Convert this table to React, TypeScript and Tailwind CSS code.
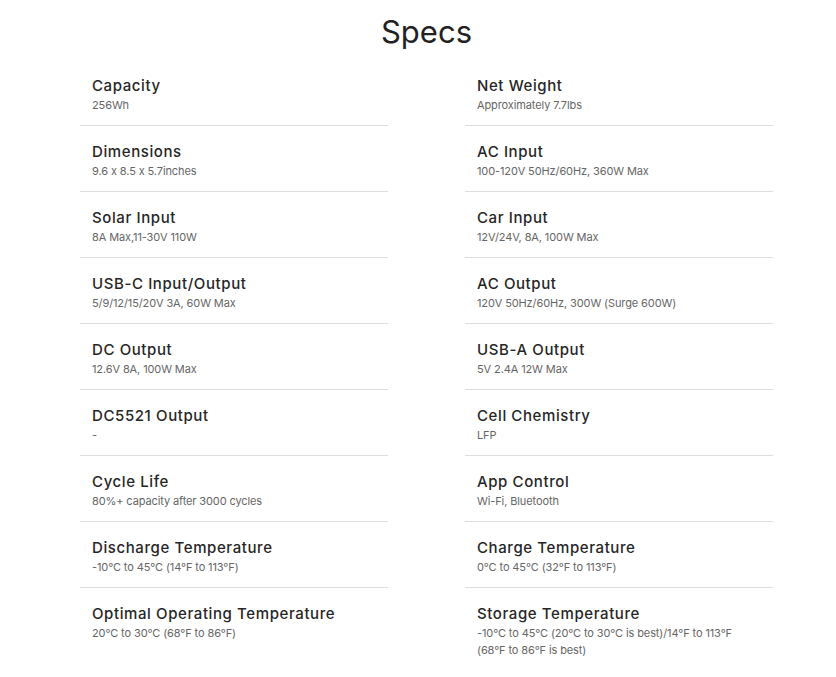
import React from "react";

interface Spec {
  label: string;
  value: string;
}

const specs: Spec[] = [
  { label: "Capacity", value: "256Wh" },
  { label: "Net Weight", value: "Approximately 7.7lbs" },
  { label: "Dimensions", value: "9.6 x 8.5 x 5.7inches" },
  { label: "AC Input", value: "100-120V 50Hz/60Hz, 360W Max" },
  { label: "Solar Input", value: "8A Max,11-30V 110W" },
  { label: "Car Input", value: "12V/24V, 8A, 100W Max" },
  { label: "USB-C Input/Output", value: "5/9/12/15/20V 3A, 60W Max" },
  { label: "AC Output", value: "120V 50Hz/60Hz, 300W (Surge 600W)" },
  { label: "DC Output", value: "12.6V 8A, 100W Max" },
  { label: "USB-A Output", value: "5V 2.4A 12W Max" },
  { label: "DC5521 Output", value: "-" },
  { label: "Cell Chemistry", value: "LFP" },
  { label: "Cycle Life", value: "80%+ capacity after 3000 cycles" },
  { label: "App Control", value: "Wi-Fi, Bluetooth" },
  { label: "Discharge Temperature", value: "-10°C to 45°C (14°F to 113°F)" },
  { label: "Charge Temperature", value: "0°C to 45°C (32°F to 113°F)" },
  { label: "Optimal Operating Temperature", value: "20°C to 30°C (68°F to 86°F)" },
  {
    label: "Storage Temperature",
    value: "-10°C to 45°C (20°C to 30°C is best)/14°F to 113°F (68°F to 86°F is best)",
  },
];

const App: React.FC = () => {
  const lastRow = specs.length - 2;

  return (
    <div className="min-h-[677px] bg-white font-['Inter',sans-serif] [font-feature-settings:'calt'_0]">
      <h1 className="pt-[12px] mb-[8px] text-center text-[31px] leading-[40px] font-normal text-[#222] pl-[17px]">
        Specs
      </h1>
      <div className="grid grid-cols-[308px_308px] gap-x-[77px] pl-[80px]">
        {specs.map((spec, i) => (
          <div
            key={spec.label}
            className={`pt-[16px] px-[12px] pb-[11px] ${i < lastRow ? "border-b border-[#dedede]" : ""}`}
          >
            <div className="text-[15px] leading-[20px] font-medium tracking-[0.04em] text-[#262626]">
              {spec.label}
            </div>
            <div className="mt-[1px] text-[11px] leading-[17px] tracking-[-0.01em] text-[#666] pr-[20px]">
              {spec.value}
            </div>
          </div>
        ))}
      </div>
    </div>
  );
};

export default App;
